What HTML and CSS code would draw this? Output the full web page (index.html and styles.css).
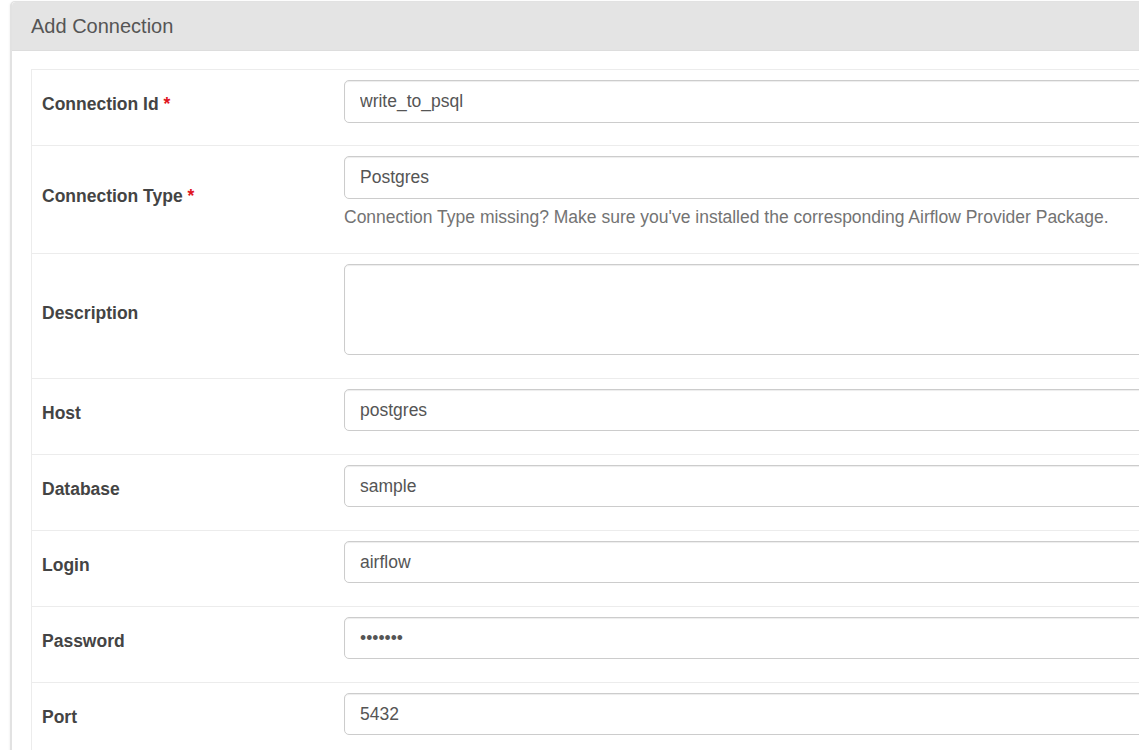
FILE: index.html
```html
<!DOCTYPE html>
<html lang="en">
<head>
<meta charset="utf-8">
<title>Add Connection</title>
<link rel="stylesheet" href="styles.css">
</head>
<body>
<div class="page">
  <div class="panel">
    <div class="panel-heading">
      <h3 class="panel-title">Add Connection</h3>
    </div>
    <div class="panel-body">
      <table class="form-table">
        <tr>
          <td class="label-cell"><label>Connection Id <span class="req">*</span></label></td>
          <td class="field-cell"><input class="form-control" type="text" value="write_to_psql"></td>
        </tr>
        <tr>
          <td class="label-cell"><label>Connection Type <span class="req">*</span></label></td>
          <td class="field-cell">
            <div class="form-control">Postgres</div>
            <p class="help-block">Connection Type missing? Make sure you've installed the corresponding Airflow Provider Package.</p>
          </td>
        </tr>
        <tr>
          <td class="label-cell"><label>Description</label></td>
          <td class="field-cell"><textarea class="form-control textarea"></textarea></td>
        </tr>
        <tr>
          <td class="label-cell"><label>Host</label></td>
          <td class="field-cell"><input class="form-control" type="text" value="postgres"></td>
        </tr>
        <tr>
          <td class="label-cell"><label>Database</label></td>
          <td class="field-cell"><input class="form-control" type="text" value="sample"></td>
        </tr>
        <tr>
          <td class="label-cell"><label>Login</label></td>
          <td class="field-cell"><input class="form-control" type="text" value="airflow"></td>
        </tr>
        <tr>
          <td class="label-cell"><label>Password</label></td>
          <td class="field-cell"><input class="form-control" type="password" value="airflow"></td>
        </tr>
        <tr>
          <td class="label-cell"><label>Port</label></td>
          <td class="field-cell"><input class="form-control" type="text" value="5432"></td>
        </tr>
      </table>
    </div>
  </div>
</div>
</body>
</html>
```

FILE: styles.css
```css
html, body {
  margin: 0;
  padding: 0;
  background: #ffffff;
  overflow: hidden;
}

body {
  font-family: "Liberation Sans", Arial, sans-serif;
  font-size: 17.5px;
  line-height: 1.42857;
  color: #333333;
}

.page {
  padding: 1px 0 0 10px;
  height: 749px;
  overflow: hidden;
}

.panel {
  width: 1350px;
  border: 1px solid #e2e2e2;
  border-left-width: 2px;
  border-radius: 5px 0 0 0;
  background: #ffffff;
  box-shadow: -1px 0 2px rgba(0, 0, 0, 0.04);
}

.panel-heading {
  background: #e4e4e4;
  padding: 13px 19px 13px 19px;
  border-bottom: 1px solid #dddddd;
  border-radius: 4px 0 0 0;
}

.panel-title {
  margin: 0;
  font-size: 20px;
  font-weight: normal;
  line-height: 22px;
  color: #555555;
}

.panel-body {
  padding: 18px 19px 19px 19px;
}

.form-table {
  border-collapse: collapse;
  width: 1300px;
  border: 1px solid #ececec;
}

.form-table td {
  border-top: 1px solid #ececec;
  border-bottom: 1px solid #ececec;
  vertical-align: middle;
}

.label-cell {
  width: 282px;
  padding: 10px;
}

.label-cell label {
  display: inline-block;
  font-weight: bold;
  color: #444444;
  margin-bottom: 6px;
}

.req {
  color: #e0141e;
}

.field-cell {
  padding: 10px 10px 22.5px 10px;
  vertical-align: top;
}

.form-control {
  display: block;
  box-sizing: border-box;
  width: 100%;
  height: 42.5px;
  margin: 0;
  padding: 7.5px 15px;
  font-family: "Liberation Sans", Arial, sans-serif;
  font-size: 17.5px;
  line-height: 25px;
  color: #555555;
  background: #ffffff;
  border: 1px solid #cccccc;
  border-radius: 5px;
  box-shadow: inset 0 1px 1px rgba(0, 0, 0, 0.075);
  outline: none;
}

.textarea {
  height: 91px;
  resize: none;
}

.help-block {
  margin: 6.5px 0 1px 0;
  color: #737373;
  white-space: nowrap;
}
```
